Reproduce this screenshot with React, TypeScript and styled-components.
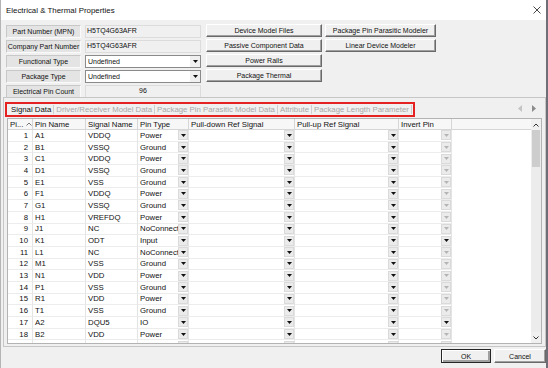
import styled, { createGlobalStyle, css } from 'styled-components';

const GlobalStyle = createGlobalStyle`
  html, body {
    margin: 0;
    padding: 0;
    background: #f0f0f0;
  }
  body {
    font-family: "Liberation Sans", Arial, sans-serif;
  }
`;

const Window = styled.div`
  width: 548px;
  height: 368px;
  box-sizing: border-box;
  background: #f0f0f0;
  border-left: 1px solid #b4b4b4;
  border-right: 2px solid #6f6e76;
  display: flex;
  flex-direction: column;
  overflow: hidden;
`;

const TitleBar = styled.div`
  height: 20px;
  flex: none;
  background: #fff;
  display: flex;
  align-items: center;
  justify-content: space-between;
  padding: 0 5px 0 5px;
  font-size: 7.9px;
  color: #111;
`;

const TopArea = styled.div`
  height: 77px;
  flex: none;
  box-sizing: border-box;
  display: flex;
  align-items: flex-start;
  padding: 4px 0 0 5px;
  gap: 4px;
`;

const PropGrid = styled.div`
  margin-top: 1px;
  display: grid;
  grid-template-columns: 75px 116px;
  grid-auto-rows: 13px;
  column-gap: 4px;
  row-gap: 2px;
  font-size: 7px;
  color: #111;
`;

const PropLabel = styled.div`
  box-sizing: border-box;
  background: #e4e4e4;
  border: 1px solid;
  border-color: #c8c8c8 #fafafa #fafafa #c8c8c8;
  display: flex;
  align-items: center;
  justify-content: center;
  white-space: nowrap;
`;

const PropValue = styled.div<{ $center?: boolean }>`
  box-sizing: border-box;
  border: 1px solid #dcdcdc;
  padding: 1px 0 0 1px;
  white-space: nowrap;
  ${(p) =>
    p.$center &&
    css`
      text-align: center;
      padding-left: 0;
    `}
`;

const Select = styled.div`
  box-sizing: border-box;
  background: #fff;
  border: 1px solid #8a8a8a;
  display: flex;
  align-items: center;
  padding-left: 2px;
`;

const SelectText = styled.span`
  flex: 1;
`;

const SelectArrow = styled.span`
  width: 10px;
  height: 11px;
  display: flex;
  align-items: center;
  justify-content: center;
  background: #f0f0f0;
`;

const ButtonGrid = styled.div`
  margin-left: 1px;
  display: grid;
  grid-template-columns: 116px 111px;
  grid-auto-rows: 13px;
  column-gap: 3px;
  row-gap: 2px;
`;

const Button = styled.button<{ $default?: boolean; $w?: number }>`
  box-sizing: border-box;
  height: 100%;
  ${(p) => p.$w && `width: ${p.$w}px;`}
  padding: 0;
  font-family: "Liberation Sans", Arial, sans-serif;
  font-size: 7px;
  color: #111;
  background: #f0f0f0;
  border: 1px solid;
  border-color: #fff #696969 #696969 #fff;
  box-shadow: inset -1px -1px 0 #a0a0a0;
  ${(p) =>
    p.$default &&
    css`
      border-color: #262626;
      box-shadow: inset 1px 1px 0 #fff, inset -2px -2px 0 #a0a0a0;
    `}
`;

const Panel = styled.div`
  height: 250px;
  flex: none;
  margin-left: 2px;
  box-sizing: border-box;
  border: 1px solid #c6c6c6;
  display: flex;
  flex-direction: column;
`;

const TabStrip = styled.div`
  height: 20px;
  flex: none;
  box-sizing: border-box;
  padding: 4px 9px 0 1px;
  display: flex;
  align-items: flex-start;
  justify-content: space-between;
`;

const TabBox = styled.div`
  width: 410px;
  height: 15px;
  box-sizing: border-box;
  border: 2px solid #e42222;
  display: flex;
  align-items: center;
  padding-left: 2px;
  font-size: 7.8px;
  white-space: nowrap;
  overflow: hidden;
`;

const Tab = styled.span<{ $active?: boolean }>`
  color: ${(p) => (p.$active ? '#111' : '#a8a8a8')};
  padding: 0 2px 0 2px;
  border-right: 1px solid #cfcfcf;
  line-height: 9px;
`;

const TabArrows = styled.div`
  display: flex;
  gap: 10px;
  padding-top: 3px;
`;

const GridBox = styled.div`
  height: 226px;
  margin: 0 3px 0 3px;
  box-sizing: border-box;
  border: 1px solid #b3b3b3;
  display: flex;
  background: #fff;
  overflow: hidden;
`;

const Table = styled.div`
  flex: 1;
  display: flex;
  flex-direction: column;
  overflow: hidden;
  font-size: 7.8px;
  color: #111;
`;

const COLS = '25px 53px 52px 51px 106px 104px 53px';

const HeaderRow = styled.div`
  height: 11px;
  flex: none;
  box-sizing: border-box;
  display: grid;
  grid-template-columns: ${COLS} 1fr;
  background: #f7f7f7;
  border-bottom: 1px solid #d6d6d6;
`;

const HeaderCell = styled.div`
  box-sizing: border-box;
  border-right: 1px solid #d6d6d6;
  padding-left: 2px;
  display: flex;
  align-items: center;
  justify-content: space-between;
  white-space: nowrap;
  overflow: hidden;
`;

const Row = styled.div`
  height: 11.7px;
  flex: none;
  box-sizing: border-box;
  display: grid;
  grid-template-columns: ${COLS};
`;

const Cell = styled.div<{ $num?: boolean }>`
  box-sizing: border-box;
  border-right: 1px solid #e4e4e4;
  border-bottom: 1px solid #ececec;
  padding-left: 2px;
  display: flex;
  align-items: center;
  white-space: nowrap;
  overflow: hidden;
  ${(p) =>
    p.$num &&
    css`
      justify-content: flex-end;
      padding: 0 4px 0 0;
    `}
`;

const CellText = styled.span`
  flex: 1;
  overflow: hidden;
`;

const DropBtn = styled.span`
  width: 10px;
  height: 10px;
  flex: none;
  box-sizing: border-box;
  background: #ebebeb;
  border: 1px solid #dadada;
  display: flex;
  align-items: center;
  justify-content: center;
`;

const ScrollBar = styled.div`
  width: 10px;
  flex: none;
  display: flex;
  flex-direction: column;
  background: #ececec;
`;

const ScrollArrow = styled.div`
  height: 11px;
  flex: none;
  display: flex;
  align-items: center;
  justify-content: center;
  background: #f0f0f0;
`;

const ScrollThumb = styled.div`
  height: 37px;
  flex: none;
  margin: 0 1px;
  background: #cdcdcd;
`;

const ScrollTrack = styled.div`
  flex: 1;
`;

const Footer = styled.div`
  flex: 1;
  display: flex;
  justify-content: flex-end;
  align-items: flex-start;
  gap: 3px;
  padding-top: 2px;
  height: 14px;
  & > button {
    height: 14px;
  }
`;

const Tri = ({ color = '#111' }: { color?: string }) => (
  <svg width="5" height="3" viewBox="0 0 5 3">
    <polygon points="0,0 5,0 2.5,3" fill={color} />
  </svg>
);

const Chevron = ({ up, color = '#333' }: { up?: boolean; color?: string }) => (
  <svg width="6" height="4" viewBox="0 0 6 4">
    <polyline
      points={up ? '0.5,3.5 3,1 5.5,3.5' : '0.5,0.5 3,3 5.5,0.5'}
      fill="none"
      stroke={color}
      strokeWidth="1"
    />
  </svg>
);

const SideTri = ({ left, color }: { left?: boolean; color: string }) => (
  <svg width="4" height="7" viewBox="0 0 4 7">
    <polygon points={left ? '4,0 0,3.5 4,7' : '0,0 4,3.5 0,7'} fill={color} />
  </svg>
);

type Pin = [number, string, string, string];

const pins: Pin[] = [
  [1, 'A1', 'VDDQ', 'Power'],
  [2, 'B1', 'VSSQ', 'Ground'],
  [3, 'C1', 'VDDQ', 'Power'],
  [4, 'D1', 'VSSQ', 'Ground'],
  [5, 'E1', 'VSS', 'Ground'],
  [6, 'F1', 'VDDQ', 'Power'],
  [7, 'G1', 'VSSQ', 'Ground'],
  [8, 'H1', 'VREFDQ', 'Power'],
  [9, 'J1', 'NC', 'NoConnect'],
  [10, 'K1', 'ODT', 'Input'],
  [11, 'L1', 'NC', 'NoConnect'],
  [12, 'M1', 'VSS', 'Ground'],
  [13, 'N1', 'VDD', 'Power'],
  [14, 'P1', 'VSS', 'Ground'],
  [15, 'R1', 'VDD', 'Power'],
  [16, 'T1', 'VSS', 'Ground'],
  [17, 'A2', 'DQU5', 'IO'],
  [18, 'B2', 'VDD', 'Power'],
  [19, 'C2', 'DQU6', 'IO'],
];

const Drop = ({ text = '', dim }: { text?: string; dim?: boolean }) => (
  <Cell>
    <CellText>{text}</CellText>
    <DropBtn>
      <Tri color={dim ? '#b4b4b4' : '#111'} />
    </DropBtn>
  </Cell>
);

export default function App() {
  return (
    <>
      <GlobalStyle />
      <Window>
        <TitleBar>
          <span>Electrical &amp; Thermal Properties</span>
          <svg width="8" height="8" viewBox="0 0 8 8">
            <path d="M0.5 0.5 L7.5 7.5 M7.5 0.5 L0.5 7.5" stroke="#333" strokeWidth="0.9" />
          </svg>
        </TitleBar>

        <TopArea>
          <PropGrid>
            <PropLabel>Part Number (MPN)</PropLabel>
            <PropValue>H5TQ4G63AFR</PropValue>
            <PropLabel>Company Part Number</PropLabel>
            <PropValue>H5TQ4G63AFR</PropValue>
            <PropLabel>Functional Type</PropLabel>
            <Select>
              <SelectText>Undefined</SelectText>
              <SelectArrow>
                <Tri />
              </SelectArrow>
            </Select>
            <PropLabel>Package Type</PropLabel>
            <Select>
              <SelectText>Undefined</SelectText>
              <SelectArrow>
                <Tri />
              </SelectArrow>
            </Select>
            <PropLabel>Electrical Pin Count</PropLabel>
            <PropValue $center>96</PropValue>
          </PropGrid>

          <ButtonGrid>
            <Button>Device Model Files</Button>
            <Button>Package Pin Parasitic Modeler</Button>
            <Button>Passive Component Data</Button>
            <Button>Linear Device Modeler</Button>
            <Button>Power Rails</Button>
            <span />
            <Button>Package Thermal</Button>
          </ButtonGrid>
        </TopArea>

        <Panel>
          <TabStrip>
            <TabBox>
              <Tab $active>Signal Data</Tab>
              <Tab>Driver/Receiver Model Data</Tab>
              <Tab>Package Pin Parasitic Model Data</Tab>
              <Tab>Attribute</Tab>
              <Tab>Package Length Parameter</Tab>
            </TabBox>
            <TabArrows>
              <SideTri left color="#c4c4c4" />
              <SideTri color="#8c8c8c" />
            </TabArrows>
          </TabStrip>

          <GridBox>
            <Table>
              <HeaderRow>
                <HeaderCell>
                  Pi...
                  <Chevron up color="#777" />
                </HeaderCell>
                <HeaderCell>Pin Name</HeaderCell>
                <HeaderCell>Signal Name</HeaderCell>
                <HeaderCell>Pin Type</HeaderCell>
                <HeaderCell>Pull-down Ref Signal</HeaderCell>
                <HeaderCell>Pull-up Ref Signal</HeaderCell>
                <HeaderCell>Invert Pin</HeaderCell>
                <span />
              </HeaderRow>
              {pins.map(([n, pin, sig, type]) => (
                <Row key={n}>
                  <Cell $num>{n}</Cell>
                  <Cell>{pin}</Cell>
                  <Cell>{sig}</Cell>
                  <Drop text={type} />
                  <Drop />
                  <Drop />
                  <Drop dim={type !== 'IO' && type !== 'Input'} />
                </Row>
              ))}
            </Table>
            <ScrollBar>
              <ScrollArrow>
                <Chevron up />
              </ScrollArrow>
              <ScrollThumb />
              <ScrollTrack />
              <ScrollArrow>
                <Chevron />
              </ScrollArrow>
            </ScrollBar>
          </GridBox>
        </Panel>

        <Footer>
          <Button $default $w={50}>
            OK
          </Button>
          <Button $w={52}>Cancel</Button>
        </Footer>
      </Window>
    </>
  );
}
